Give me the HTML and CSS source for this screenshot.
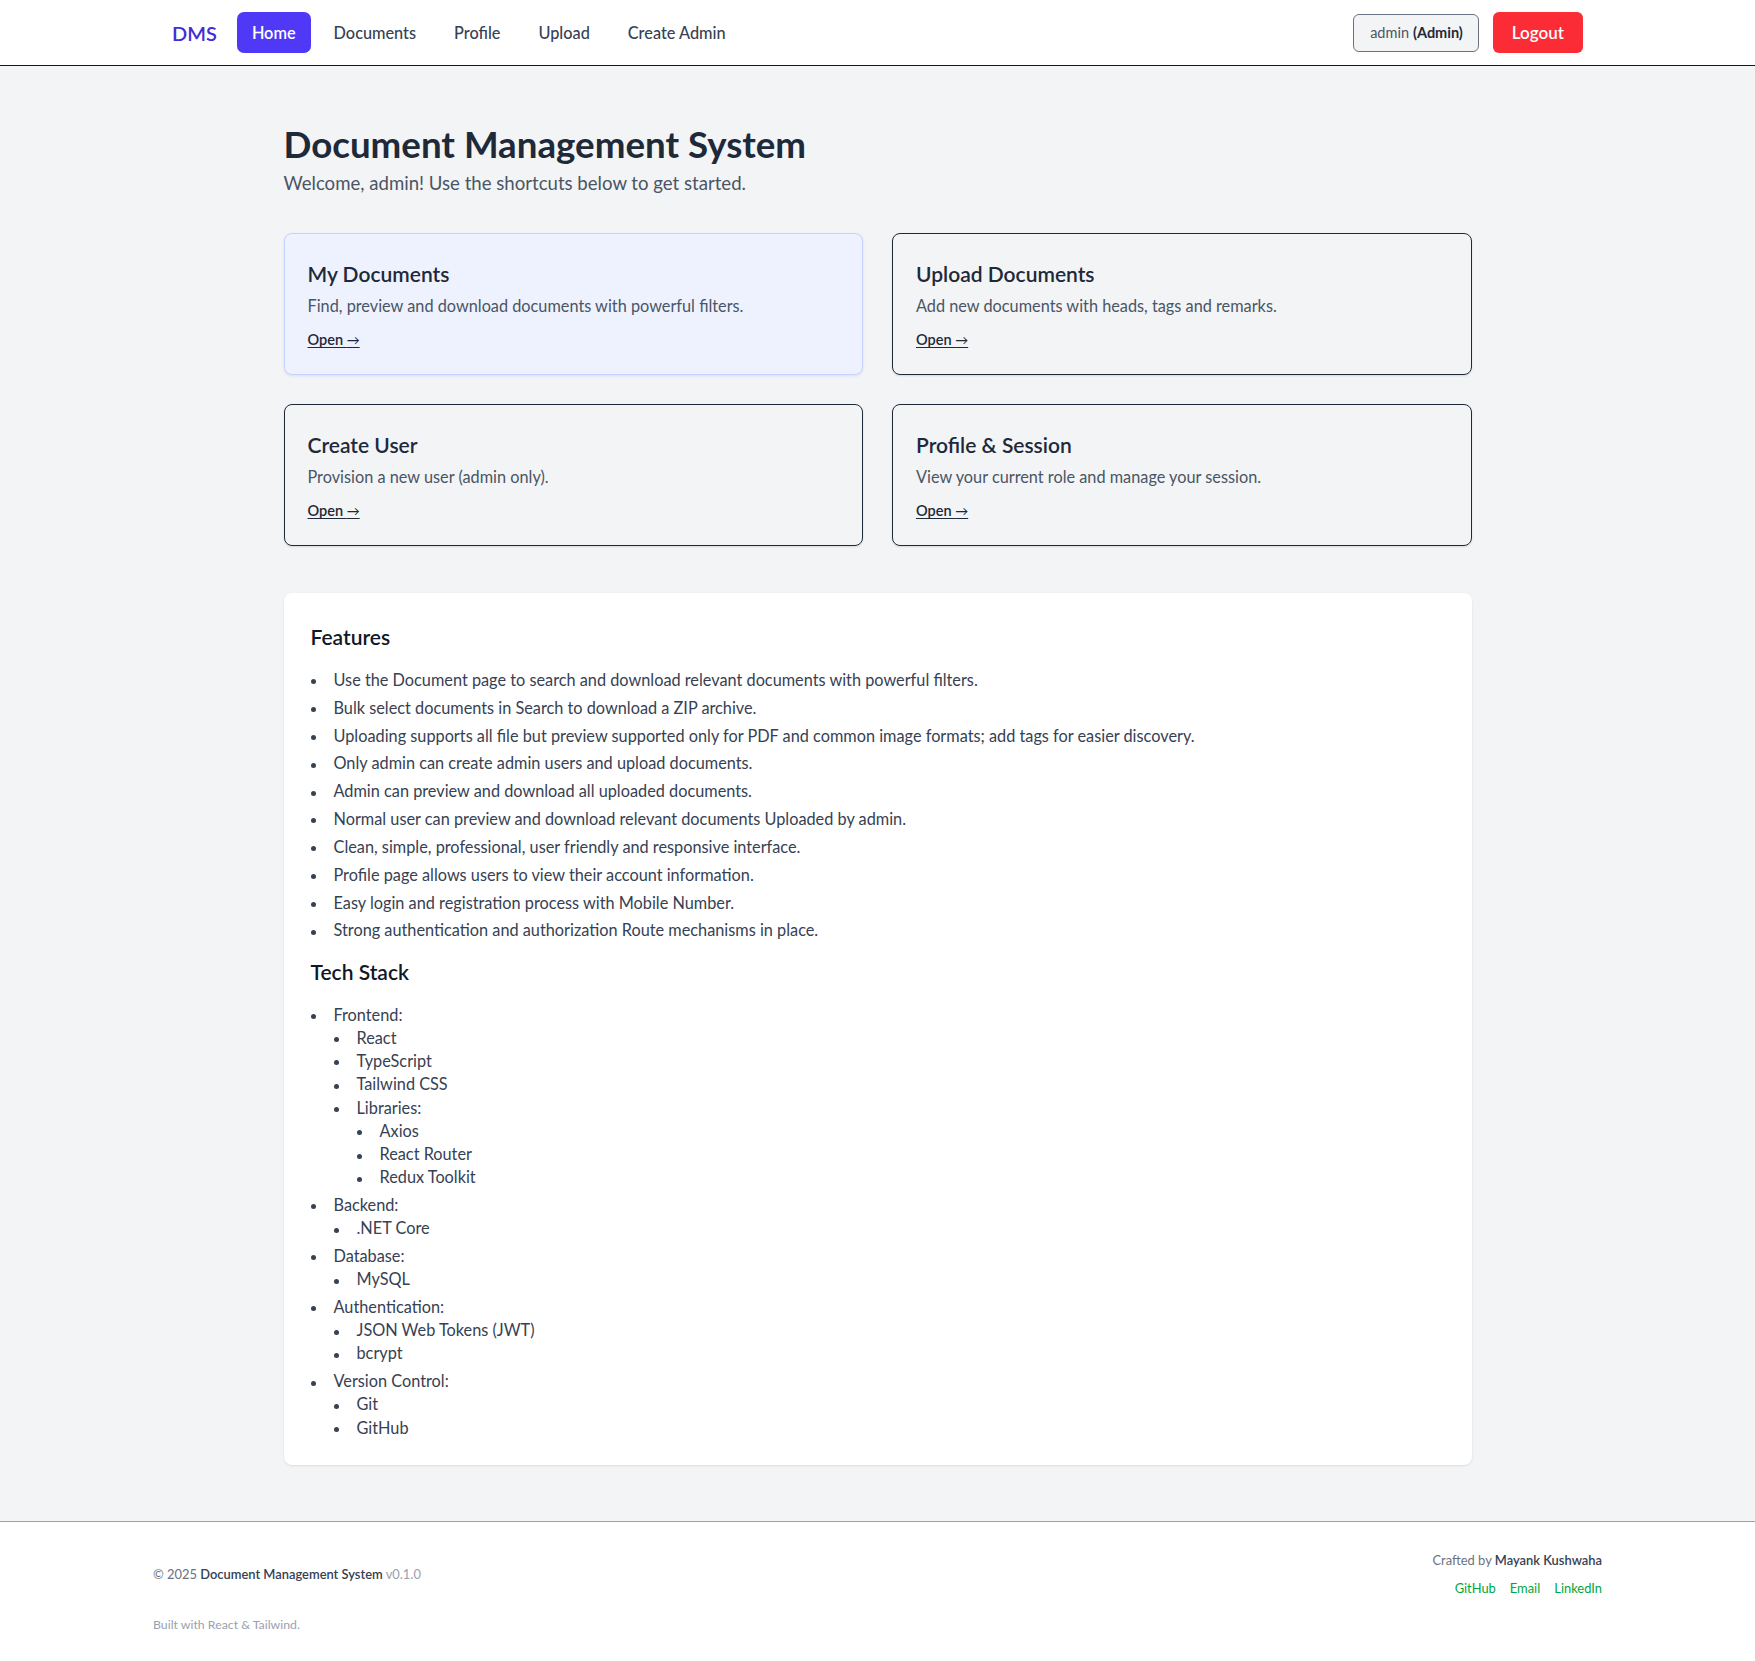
FILE: index.html
```html
<!DOCTYPE html>
<html lang="en">
<head>
<meta charset="utf-8">
<title>Document Management System</title>
<link rel="stylesheet" href="styles.css">
</head>
<body>
<header class="nav">
  <div class="nav-inner">
    <nav class="nav-left">
      <a class="brand" href="#">DMS</a>
      <a class="nav-link active" href="#">Home</a>
      <a class="nav-link" href="#">Documents</a>
      <a class="nav-link" href="#">Profile</a>
      <a class="nav-link" href="#">Upload</a>
      <a class="nav-link" href="#">Create Admin</a>
    </nav>
    <div class="nav-right">
      <span class="user-chip">admin <b>(Admin)</b></span>
      <button class="logout" type="button">Logout</button>
    </div>
  </div>
</header>

<main class="main">
  <div class="container">
    <h1 class="title">Document Management System</h1>
    <p class="lead">Welcome, admin! Use the shortcuts below to get started.</p>

    <div class="cards">
      <a class="card card-active" href="#">
        <h2 class="card-title">My Documents</h2>
        <p class="card-desc">Find, preview and download documents with powerful filters.</p>
        <span class="card-open">Open <span class="arrow">→</span></span>
      </a>
      <a class="card" href="#">
        <h2 class="card-title">Upload Documents</h2>
        <p class="card-desc">Add new documents with heads, tags and remarks.</p>
        <span class="card-open">Open <span class="arrow">→</span></span>
      </a>
      <a class="card" href="#">
        <h2 class="card-title">Create User</h2>
        <p class="card-desc">Provision a new user (admin only).</p>
        <span class="card-open">Open <span class="arrow">→</span></span>
      </a>
      <a class="card" href="#">
        <h2 class="card-title">Profile &amp; Session</h2>
        <p class="card-desc">View your current role and manage your session.</p>
        <span class="card-open">Open <span class="arrow">→</span></span>
      </a>
    </div>

    <section class="panel">
      <h3 class="panel-title">Features</h3>
      <ul class="list features">
        <li>Use the Document page to search and download relevant documents with powerful filters.</li>
        <li>Bulk select documents in Search to download a ZIP archive.</li>
        <li>Uploading supports all file but preview supported only for PDF and common image formats; add tags for easier discovery.</li>
        <li>Only admin can create admin users and upload documents.</li>
        <li>Admin can preview and download all uploaded documents.</li>
        <li>Normal user can preview and download relevant documents Uploaded by admin.</li>
        <li>Clean, simple, professional, user friendly and responsive interface.</li>
        <li>Profile page allows users to view their account information.</li>
        <li>Easy login and registration process with Mobile Number.</li>
        <li>Strong authentication and authorization Route mechanisms in place.</li>
      </ul>

      <h3 class="panel-title second">Tech Stack</h3>
      <ul class="list stack">
        <li>Frontend:
          <ul class="list sub">
            <li>React</li>
            <li>TypeScript</li>
            <li>Tailwind CSS</li>
            <li>Libraries:
              <ul class="list sub">
                <li>Axios</li>
                <li>React Router</li>
                <li>Redux Toolkit</li>
              </ul>
            </li>
          </ul>
        </li>
        <li>Backend:
          <ul class="list sub"><li>.NET Core</li></ul>
        </li>
        <li>Database:
          <ul class="list sub"><li>MySQL</li></ul>
        </li>
        <li>Authentication:
          <ul class="list sub"><li>JSON Web Tokens (JWT)</li><li>bcrypt</li></ul>
        </li>
        <li>Version Control:
          <ul class="list sub"><li>Git</li><li>GitHub</li></ul>
        </li>
      </ul>
    </section>
  </div>
</main>

<footer class="footer">
  <div class="footer-inner">
    <div class="footer-row">
      <p class="copy">© 2025 <strong>Document Management System</strong> <span class="ver">v0.1.0</span></p>
      <div class="credits">
        <p class="crafted">Crafted by <strong>Mayank Kushwaha</strong></p>
        <div class="links">
          <a href="#">GitHub</a>
          <a href="#">Email</a>
          <a href="#">LinkedIn</a>
        </div>
      </div>
    </div>
    <p class="built">Built with React &amp; Tailwind.</p>
  </div>
</footer>
</body>
</html>
```
FILE: styles.css
```css
* { box-sizing: border-box; }
html, body { margin: 0; padding: 0; }
body {
  font-family: Lato, "Noto Sans", sans-serif;
  background: #f3f4f6;
  color: #1e2939;
  min-height: 100vh;
  display: flex;
  flex-direction: column;
}
a { text-decoration: none; color: inherit; }
p, h1, h2, h3, ul { margin: 0; }

/* NAV */
.nav {
  background: #ffffff;
  border-bottom: 1px solid #101828;
  height: 66px;
  flex: none;
}
.nav-inner {
  width: 1411px;
  margin: 0 auto;
  height: 65px;
  display: flex;
  align-items: center;
  justify-content: space-between;
}
.nav-left { display: flex; align-items: center; gap: 8px; }
.brand {
  font-size: 20px;
  font-weight: 600;
  color: #432dd7;
  margin-right: 12px;
  line-height: 28px;
}
.nav-link {
  font-size: 16.3px;
  font-weight: 500;
  color: #364153;
  padding: 8px 15px;
  line-height: 25px;
  border-radius: 7px;
}
.nav-link.active {
  background: #4f39f6;
  color: #ffffff;
  font-weight: 600;
}
.nav-right { display: flex; align-items: center; gap: 14px; }
.user-chip {
  display: inline-flex;
  align-items: center;
  height: 38px;
  padding: 0 15px 0 16px;
  border: 1px solid #6a7282;
  border-radius: 6px;
  background: #f3f4f6;
  font-size: 14.5px;
  color: #4a5565;
}
.user-chip b { font-weight: 700; color: #1e2939; margin-left: 4px; }
.logout {
  font-family: inherit;
  border: 0;
  background: #fb2c36;
  color: #ffffff;
  font-size: 17px;
  font-weight: 600;
  line-height: 25px;
  padding: 8px 19px;
  border-radius: 6px;
}

/* MAIN */
.main { flex: none; padding: 58px 0 56px; }
.container { width: 1188px; margin: 0 auto; }
.title {
  font-size: 36.7px;
  line-height: 40px;
  font-weight: 700;
  color: #1e2939;
}
.lead {
  margin-top: 5px;
  font-size: 18.6px;
  line-height: 28px;
  color: #4a5565;
}
.cards {
  margin-top: 36px;
  display: grid;
  grid-template-columns: 1fr 1fr;
  gap: 29px;
}
.card {
  display: block;
  height: 142px;
  border: 1px solid #1e2939;
  border-radius: 8px;
  padding: 26px 23px 24px;
  box-shadow: 0 1px 2px rgba(0,0,0,0.12);
}
.card-active {
  background: #eef2ff;
  border-color: #c6d2ff;
  box-shadow: 0 1px 3px rgba(79,57,246,0.12);
}
.card-title {
  font-size: 21px;
  line-height: 28px;
  font-weight: 600;
  color: #1e2939;
}
.card-desc {
  margin-top: 6px;
  font-size: 16.3px;
  line-height: 24px;
  color: #4a5565;
}
.card-open {
  display: inline-block;
  margin-top: 12px;
  font-size: 14.5px;
  line-height: 20px;
  font-weight: 600;
  color: #1e2939;
  text-decoration: underline;
  text-underline-offset: 2px;
}
.card-open .arrow { font-weight: 400; font-size: 13px; }

.panel {
  margin-top: 47px;
  background: #ffffff;
  border-radius: 8px;
  box-shadow: 0 1px 3px rgba(0,0,0,0.08), 0 1px 2px -1px rgba(0,0,0,0.08);
  padding: 30px 27px 26px;
}
.panel-title {
  font-size: 21px;
  line-height: 28px;
  font-weight: 600;
  color: #101828;
  margin-bottom: 17px;
}
.panel-title.second { margin-top: 16px; }

.list {
  list-style: none;
  padding-left: 23px;
  font-size: 16.3px;
  color: #364153;
}
.list li { line-height: 23.27px; }
.list li::before {
  content: "";
  display: inline-block;
  width: 5px;
  height: 5px;
  border-radius: 50%;
  background: #364153;
  vertical-align: middle;
  margin-left: -22.5px;
  margin-right: 17.5px;
}
.features > li + li { margin-top: 4.55px; }
.stack > li + li { margin-top: 4.4px; }
.sub { padding-left: 23px; }

/* FOOTER */
.footer {
  flex: 1 0 auto;
  background: #ffffff;
  border-top: 1px solid #99a1af;
  padding: 28px 0 20px;
}
.footer-inner { width: 1449px; margin: 0 auto; }
.footer-row {
  display: flex;
  justify-content: space-between;
  align-items: center;
}
.copy { font-size: 12.9px; line-height: 20px; color: #6a7282; }
.copy strong { font-weight: 600; color: #364153; }
.copy .ver { color: #99a1af; }
.credits { text-align: right; }
.crafted { font-size: 12.9px; line-height: 20px; color: #6a7282; }
.crafted strong { font-weight: 600; color: #364153; }
.links {
  margin-top: 8.5px;
  display: flex;
  justify-content: flex-end;
  gap: 14px;
  font-size: 12.9px;
  line-height: 20px;
}
.links a { color: #00a63e; }
.built {
  margin-top: 19px;
  font-size: 12.3px;
  line-height: 16px;
  color: #99a1af;
}
```
